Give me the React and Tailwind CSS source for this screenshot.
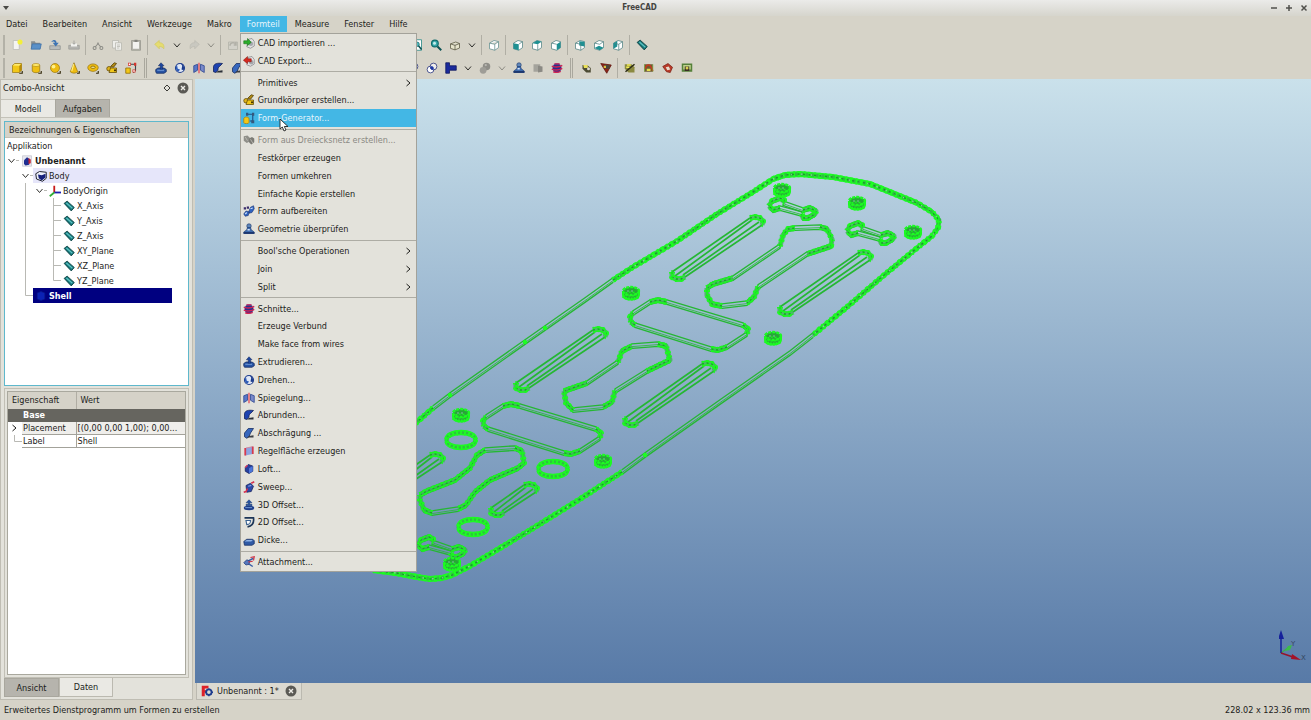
import React from 'react';

/* ---------- small icons, all on a 16x16 grid ---------- */

const shapes = {
  newDoc: <><path d="M3 2h8v12H3z" fill="#f4f4f2" stroke="#b9b9b4" /><circle cx="12" cy="4" r="3.400" fill="#f3ef3a" /></>,
  open: <><path d="M1.500 3h5l1 2h6v8h-12z" fill="#8a8f8f" /><path d="M3 6.500h12l-1.500 7H1.500z" fill="#5a90c8" stroke="#3c6fa8" /></>,
  save: <><path d="M1 9h14v5H1z" fill="#b9bcbb" stroke="#8d908f" /><path d="M3 4c3-4 7-3 7 1h3L9 10 5 5h3c-1-2-3-2-5-1z" fill="#3d74b4" /></>,
  print: <><path d="M1 8.500h14v5H1z" fill="#b4b4b0" stroke="#9a9a96" /><path d="M4 6h8v4H4z" fill="#f1f1ee" /><path d="M8 2v5M6 5l2 2 2-2" stroke="#9a9a96" fill="none" /></>,
  cut: <g fill="none" stroke="#8d8d87" strokeWidth="1.400"><path d="M4 11 9 5M12 11 7 5" /><circle cx="3.500" cy="12" r="2" /><circle cx="12.500" cy="12" r="2" /></g>,
  copy: <g fill="#eeeeea" stroke="#b5b5ae"><path d="M2 2h8v10H2z" /><path d="M6 5h8v10H6z" /><path d="M8 8h4M8 10h4M8 12h3" /></g>,
  paste: <><path d="M2 2h12v13H2z" fill="#b4b4ab" stroke="#96968d" /><path d="M4 4h8v9H4z" fill="#f3f3f0" /><path d="M6 1h4v3H6z" fill="#83837d" /></>,
  undo: <path d="m1 7 6-5v3c5 0 7 3 6 8-1-2-3-3-6-3v3z" fill="#e5dc70" stroke="#d3ca62" />,
  redo: <path d="m15 7-6-5v3c-5 0-7 3-6 8 1-2 3-3 6-3v3z" fill="#c9c8c0" stroke="#bcbbb2" />,
  refresh: <g fill="#d2d1c9" stroke="#b2b1a8"><path d="M2 4h12v10H2z" /><path d="M4 9c0-5 6-5 8-2M12 4v4H9" fill="none" strokeWidth="2" /></g>,
  fitPage: <><path d="M2 1h12v14H2z" fill="#fff" stroke="#18807f" /><circle cx="8" cy="7" r="3" fill="#56b9bb" stroke="#136b6c" /><path d="m10 9 4 5" stroke="#0c5152" strokeWidth="2" /></>,
  zoomTool: <><circle cx="6.500" cy="6" r="4.500" fill="#35a7a9" stroke="#0d6a6b" strokeWidth="1.500" /><circle cx="6" cy="5.500" r="2" fill="#c5ecec" /><path d="m10 10 5 5" stroke="#0b5253" strokeWidth="2.500" /></>,
  drawStyle: <path d="M2 6.500 9 4l5 2v6l-6 2.500-6-2zm0 0L8 8.500 14 6M8 8.500v6" fill="#e6e4cc" stroke="#55543e" />,
  cubeIso: <path d="M2 5.500 8 2l6 1.500v8L9 15l-7-2zm0 0 7 1.500 5-3.500M9 7v8" fill="#fff" stroke="#5f8c8e" />,
  cubeFront: <><path d="M2 5.500 8 2l6 1.500v8L9 15l-7-2z" fill="#fff" stroke="#4f8082" /><path d="m2 5.500 7 1.500v8l-7-2z" fill="#1e9092" /><path d="m9 7 5-3.500" stroke="#4f8082" /></>,
  cubeTop: <><path d="M2 5.500 8 2l6 1.500v8L9 15l-7-2z" fill="#fff" stroke="#4f8082" /><path d="M2 5.500 8 2l6 1.500L9 7z" fill="#1e9092" /><path d="M9 7v8" stroke="#4f8082" /></>,
  cubeRight: <><path d="M2 5.500 8 2l6 1.500v8L9 15l-7-2z" fill="#fff" stroke="#4f8082" /><path d="m9 7 5-3.500v8L9 15z" fill="#1e9092" /><path d="m2 5.500 7 1.500" stroke="#4f8082" /></>,
  cubeRear: <><path d="M2 5.500 8 2l6 1.500v8L9 15l-7-2z" fill="#fff" stroke="#4f8082" /><path d="m7 3 7 .5V10l-7-1.500z" fill="#1e9092" /><path d="m2 5.500 7 1.500v8" fill="none" stroke="#4f8082" /></>,
  cubeBottom: <><path d="M2 5.500 8 2l6 1.500v8L9 15l-7-2z" fill="#fff" stroke="#4f8082" /><path d="m2 12 6-3 6 2.500L9 15z" fill="#1e9092" /><path d="m2 5.500 7 1.500 5-3.500" fill="none" stroke="#4f8082" /></>,
  cubeLeft: <><path d="M2 5.500 8 2l6 1.500v8L9 15l-7-2z" fill="#fff" stroke="#4f8082" /><path d="m2 5.500 5-3V10l-5 3z" fill="#1e9092" /><path d="m4 6 5 1 5-3.500M9 7v8" fill="none" stroke="#4f8082" /></>,
  ruler: <><path d="m1.500 4.500 4-3 9.500 8.500-4 4.500z" fill="#16777a" stroke="#0a3f41" strokeWidth="1.200" /><path d="m4.500 4 8 7" stroke="#5fc4c4" strokeWidth="1.500" /></>,
  box: <><path d="M2 4.500 5 2h9v9l-3 3H2z" fill="#f2c718" stroke="#8a6600" strokeWidth=".8" /><path d="M11 5v8.500l3-3V2.500z" fill="#b78a08" /><path d="M2.500 4.500 5 2.500h8L11 5z" fill="#ffeb6e" /><path d="M11 15h4v-3" fill="none" stroke="#33290a" strokeWidth="1.500" /></>,
  cylinder: <><path d="M3 4v8c1 3 9 3 10 0V4z" fill="#eebf14" stroke="#8a6600" strokeWidth=".8" /><ellipse cx="8" cy="4" rx="5" ry="2" fill="#ffeb6e" stroke="#a97e08" strokeWidth=".8" /><path d="M11 15h4v-3" fill="none" stroke="#33290a" strokeWidth="1.500" /></>,
  sphere: <><circle cx="8" cy="8" r="6" fill="#eebc12" stroke="#8a6600" strokeWidth=".8" /><circle cx="6" cy="6" r="2.500" fill="#fff08a" /><path d="M11 15h4v-3" fill="none" stroke="#33290a" strokeWidth="1.500" /></>,
  cone: <><path d="M8 1 13 13c-2 2.500-8 2.500-10 0z" fill="#eebc12" stroke="#8a6600" strokeWidth=".8" /><path d="M7.500 3 5 12" stroke="#fff08a" strokeWidth="1.500" /><path d="M12 15h3v-3" fill="none" stroke="#33290a" strokeWidth="1.500" /></>,
  torus: <><ellipse cx="8" cy="7.500" rx="7" ry="5" fill="#eebc12" stroke="#8a6600" strokeWidth=".8" /><ellipse cx="8" cy="7" rx="3" ry="1.500" fill="#fff3a5" stroke="#7a5a00" /><path d="M12 15h3v-3" fill="none" stroke="#33290a" strokeWidth="1.500" /></>,
  primitives: <><path d="M6 6 11 1l3 1-4 5z" fill="#b18a14" stroke="#4f3c03" /><circle cx="4" cy="9" r="3" fill="#e0b41b" stroke="#5f4703" /><path d="M6 8h8v6H4z" fill="#f2c718" stroke="#5f4703" /><circle cx="12" cy="11" r="1.500" fill="#473500" /></>,
  builder: <><path d="M1 8h6v7H1z" fill="#f2c718" stroke="#8a6500" /><path d="M6 3h8v8l-3 3" fill="none" stroke="#43464a" strokeWidth="1.500" /><path d="M4 1h4v4H4zM12 1h3v4h-3zM10 10h4v4h-4z" fill="#d5352d" /><path d="M5 2h2v2H5zM11 11h2v2h-2z" fill="#fff" /></>,
  builderBlue: <><path d="M5 3h8v9H9" fill="none" stroke="#1b4f85" strokeWidth="1.500" /><path d="M4 1h3v4H4zM12 1h3v4h-3zM11 11h4v4h-4z" fill="#36587c" /><path d="M1 9c0-3 7-3 7 0v5c0 2-7 2-7 0z" fill="#f2c718" stroke="#a67e10" /></>,
  extrude: <><path d="M1 10 4 8h8l3 2v3l-3 2H2l-1-2z" fill="#2754a5" stroke="#12285e" /><path d="M8 1 4.500 5H7v5h3V5h2z" fill="#1b46a0" stroke="#10245a" strokeWidth=".7" /><path d="M3 11h9" stroke="#8cb4e8" /></>,
  revolve: <><circle cx="8" cy="8" r="6" fill="#dfe7f5" stroke="#1f3d8c" strokeWidth="1.500" /><path d="M4 4c-3 3-1 8 2 9l2-3-3-1z" fill="#2c5bb8" /><path d="M9 2c4 0 5 5 4 9l-3-1 1-5z" fill="#18388b" /></>,
  mirror: <><path d="m1 5 5-2v8l-5 3z" fill="#5a78c9" stroke="#27408c" /><path d="m15 5-5-2v8l5 3z" fill="#7888cb" stroke="#27408c" /><path d="M8 1v14" stroke="#e2616b" strokeWidth="2" /></>,
  fillet: <><path d="M2 6c1-4 5-5 12-4L10 6c-2 1-2 3-2 5l-3 3-3-1z" fill="#1e43b0" stroke="#0d1c53" /><path d="m8 12 6-1v3H5z" fill="#2b3038" /></>,
  chamfer: <><path d="m2 8 5-6h7l-4 6-2 5-3 2-3-2z" fill="#3767bd" stroke="#12285e" /><path d="m8 12 6-1v3H5z" fill="#3c3f45" /></>,
  booleanCircles: <><circle cx="6" cy="10" r="4.500" fill="#fff" stroke="#1d2b77" /><circle cx="10" cy="6" r="4.500" fill="#fff" fillOpacity=".6" stroke="#1d2b77" /><path d="M6 6c3-1 5 1 4 4-3 1-5-1-4-4z" fill="#1c37a5" /></>,
  join: <path d="M1 1h5v4h9v6H6v4H1z" fill="#1a2a9c" stroke="#0c145a" />,
  spheresGrey: <><circle cx="10" cy="6" r="5" fill="#8f8e88" /><circle cx="5.500" cy="11" r="4.500" fill="#9e9d97" /><circle cx="9" cy="4" r="1.500" fill="#b9b8b2" /></>,
  check: <><circle cx="8" cy="4" r="3" fill="#5f87bb" stroke="#1c3668" strokeWidth=".8" /><path d="M6 6h4l1 3 4 3v2H1v-2l4-3z" fill="#3d6cae" stroke="#1c3668" strokeWidth=".8" /><path d="M1 12h14v2.500H1z" fill="#1d3870" /><path d="M6 9h3" stroke="#d5e4f8" strokeWidth="2" /></>,
  cubeGrey: <><path d="M2 3h9v10H2z" fill="#a4a39c" /><path d="m8 5 6 1v7l-6 1z" fill="#8b8a84" /></>,
  section: <><circle cx="8" cy="8" r="6" fill="#27318e" /><path d="M1 5.500c4 1.500 10 1.500 14-1M1 9.500c4 1.500 10 1.500 14-1M3 13c3 1 7 1 10-.5" fill="none" stroke="#d42252" strokeWidth="2" /><path d="M4.500 2.500h7" stroke="#b92f66" strokeWidth="2" /></>,
  measureA: <><path d="M2 4h6l5 4v6H7L2 9z" fill="#4c4b33" /><path d="M3 4h6v4H4z" fill="#e9df5a" /><circle cx="10" cy="9" r="2" fill="#dedbd0" /></>,
  measureB: <><path d="m1 2 14 2-6 11z" fill="#8f2418" stroke="#5a130c" /><path d="M5 4h8v5H7z" fill="#4a463b" /><path d="M5 5h3v3H5z" fill="#e0c23f" /></>,
  measureC: <><path d="M1 3h9l4 4v7H6L1 9z" fill="#8b8a40" /><path d="m2 13 12-10" stroke="#2c2b15" strokeWidth="2" /><path d="M4 4h5M3 7h4" stroke="#f1ea53" strokeWidth="2" /></>,
  measureD: <><path d="M2 3h11v10H2z" fill="#6c5a34" /><path d="M3 9c2-7 7-7 10 3" stroke="#c53b1e" strokeWidth="2" fill="none" /><path d="M5 9h5v3H5z" fill="#e6e04b" /><path d="M2 13V3M13 3v10" stroke="#74a13a" /></>,
  measureE: <><path d="m1 6 7-4 6 5-3 7-5-1z" fill="#b93a28" stroke="#7c2015" /><path d="m5 7 4-1 2 4-4 1z" fill="#e9dccb" /></>,
  measureF: <><path d="M1 2h14v11H1z" fill="#55803a" /><path d="M3 4h10v6H3z" fill="#bfd28d" /><path d="M5 6h6v6H5z" fill="#3b2c25" /><circle cx="8" cy="8" r="2" fill="#d9d050" /></>,
  importCad: <><path d="m7 3 5-1 3 4v6l-5 3-5-2z" fill="#e2e3e4" stroke="#85868a" /><circle cx="10.500" cy="9" r="3" fill="#a4a7ac" /><path d="M1 5h5V2l5 5-5 4.500V9H1z" fill="#2aad2a" stroke="#126912" strokeWidth=".7" /></>,
  exportCad: <><path d="m7 3 5-1 3 4v6l-5 3-5-2z" fill="#e2e3e4" stroke="#85868a" /><circle cx="11" cy="9.500" r="3" fill="#a4a7ac" /><path d="M11 5H6V2L.5 7 6 11.500V9h5z" fill="#d6281e" stroke="#85130d" strokeWidth=".7" /></>,
  meshGrey: <><path d="m1 3 5-1 3 3v5l-4 2-4-3z" fill="#8f8f89" /><path d="m8 6 4-2 3 2v5l-4 3-3-3z" fill="#7b7b75" /><path d="m3 4 3 5M10 7l3 5" stroke="#c5c4bd" /></>,
  refine: <><path d="m8 8 2-5 4-2 1 4-3 5-4 1zM1 12l3-4 4 1-1 5-4 1z" fill="#2f63c0" stroke="#162f70" strokeWidth=".8" /><path d="M1 3h3v3H1zM5 2h3v3H5z" fill="#3a2d6a" /><path d="m10 5 3-1M3 12l2-2" stroke="#cadefa" strokeWidth="1.500" /></>,
  ruled: <><path d="m3 4 10-2v10L3 14z" fill="#8da4e0" /><path d="M3 4v10M13 2v10" stroke="#d63a4e" strokeWidth="2.400" /><path d="m4 4 8-1.600" stroke="#dc7f92" /></>,
  loft: <><path d="m3 6 4-4 6 2v7l-5 3-5-3z" fill="#26409f" stroke="#14205b" /><path d="m8 7 5-3v7l-5 3z" fill="#4b76d9" /><path d="m3 6 3-3" stroke="#d6385c" strokeWidth="2" /></>,
  sweep: <><path d="m4 6 6-3 4 4-3 7-6 1z" fill="#2b48a9" stroke="#152259" /><path d="m1 15 3-1 2-4M11 3l4-2" stroke="#d6304e" strokeWidth="2.200" fill="none" /><path d="m7 7 4-1" stroke="#8da9ee" strokeWidth="1.500" /></>,
  offset3: <><ellipse cx="8" cy="12" rx="7" ry="3" fill="#1f3f8d" /><path d="M8 1 4 5h3v2H4v2h8V7H9V5h3z" fill="#2454a5" stroke="#132c63" strokeWidth=".6" /><path d="M3 11.500h9" stroke="#8cb4e8" /></>,
  offset2: <><path d="M2 2.500h12c1 7-2 11-8 12" fill="none" stroke="#1c3557" strokeWidth="2.200" /><path d="M4 6h6c0 4-1 5-5 5.500z" fill="#fff" stroke="#3a6291" strokeWidth="1.500" /></>,
  thickness: <><path d="m1 10 4-3h8l2 2v4l-3 2H2z" fill="#2f5aa5" stroke="#162d60" /><path d="m2 10 3-2h8l-2 2z" fill="#8fb3e6" /></>,
  attach: <><path d="M14 3 4 8l9 6" fill="none" stroke="#3a5fa8" strokeWidth="2" /><path d="m1 9 4-4 4 2-1 4-4 1z" fill="#5578bd" stroke="#233c7b" /><path d="m10 2 5-1-1 5M7 8l6-1" stroke="#cf2f42" strokeWidth="1.600" fill="none" /></>,
  doc: <><path d="M2 1h12v14H2z" fill="#e8e8ee" stroke="#c6c6d0" /><path d="m4 7 4-4 3 2v8l-5 1-2-2z" fill="#1d2d91" /><path d="m10 4 3 2v5l-3 1z" fill="#c82330" /></>,
  body: <><path d="m1 5 5-3 9 1v8l-5 4-8-3z" fill="#eef1fa" stroke="#20222c" strokeWidth="1.300" /><path d="m4 6 5 1 5-2v5l-5 4-4-3z" fill="#16207a" /></>,
  origin: <><path d="M7 1v9" stroke="#c81a1a" strokeWidth="2.400" /><path d="M7 10h9" stroke="#1a1fb0" strokeWidth="2.400" /><path d="m7 10-6 5" stroke="#2fae35" strokeWidth="2.400" /></>,
  shell: <path d="m3 4 5-2 5 2v8l-5 2-5-2z" fill="#0b22b4" stroke="#0a1a8c" />,
  logo: <><path d="M1 1h9v3.500H5V7h3v3H5v5H1z" fill="#dc2129" /><circle cx="10.500" cy="9.500" r="3.600" fill="none" stroke="#1d3b8e" strokeWidth="2.400" /><path d="M10.500 4.500v2M10.500 13v2M5.500 9.500h2M14 9.500h2" stroke="#1d3b8e" strokeWidth="2" /></>,
};

function Icon({ name }) {
  return <svg viewBox="0 0 16 16" className="block h-3 w-3 shrink-0" aria-hidden="true">{shapes[name]}</svg>;
}

function Chevron({ className }) {
  return (
    <svg viewBox="0 0 8 8" className={className} fill="none" stroke="currentColor" aria-hidden="true">
      <path d="m1 2.500 3 3.500 3-3.500" />
    </svg>
  );
}

function CloseBadge() {
  return (
    <svg viewBox="0 0 12 12" className="h-3 w-3" aria-hidden="true">
      <circle cx="6" cy="6" r="5.500" fill="#5b5a55" />
      <path d="m4 4 4 4m0-4-4 4" stroke="#eeede8" strokeWidth="1.400" />
    </svg>
  );
}

/* ---------- toolbars ---------- */

function Toolbar({ label, items }) {
  return (
    <div role="toolbar" aria-label={label} className="flex h-[23px] items-center overflow-hidden">
      <span className="ml-[3px] mr-[2px] h-5 w-[2px] shrink-0 border-x border-[#b3b1a7]" />
      {items.map((item, i) => {
        if (item === '|') return <span key={i} className="mx-[2px] h-5 w-px shrink-0 bg-[#b0aea4]" />;
        if (item === '||') return <span key={i} className="mx-1 h-5 w-[3px] shrink-0 border-x border-[#a9a79d]" />;
        if (item === 'v' || item === 'vd')
          return (
            <button key={i} aria-label="Mehr" className={item === 'v' ? 'flex w-[15px] shrink-0 justify-center text-[#2e2e2b]' : 'flex w-[15px] shrink-0 justify-center text-[#8d8c84]'}>
              <Chevron className="h-2 w-2" />
            </button>
          );
        if (item === 'wide') return <span key={i} className="w-40 shrink-0" />;
        if (item === 'medium') return <span key={i} className="w-[157px] shrink-0" />;
        return (
          <button key={i} aria-label={item} className="flex h-[19px] w-[19px] shrink-0 items-center justify-center">
            <Icon name={item} />
          </button>
        );
      })}
    </div>
  );
}

const fileTools = ['newDoc', 'open', 'save', 'print', '|', 'cut', 'copy', 'paste', '|', 'undo', 'v', 'redo', 'vd', '|', 'refresh', 'wide', '|', 'fitPage', 'zoomTool', 'drawStyle', 'v', '|', 'cubeIso', '|', 'cubeFront', 'cubeTop', 'cubeRight', '|', 'cubeRear', 'cubeBottom', 'cubeLeft', '|', 'ruler'];
const partTools = ['box', 'cylinder', 'sphere', 'cone', 'torus', 'primitives', 'builder', '||', 'extrude', 'revolve', 'mirror', 'fillet', 'chamfer', 'medium', 'booleanCircles', 'booleanCircles', 'join', 'v', 'spheresGrey', 'vd', 'check', 'cubeGrey', 'section', '||', 'measureA', 'measureB', '|', 'measureC', 'measureD', 'measureE', 'measureF'];

/* ---------- menu ---------- */

const partMenu = [
  ['CAD importieren ...', 'importCad'],
  ['CAD Export...', 'exportCad'],
  null,
  ['Primitives', '', 'sub'],
  ['Grundkörper erstellen...', 'primitives'],
  ['Form-Generator...', 'builderBlue', 'active'],
  null,
  ['Form aus Dreiecksnetz erstellen...', 'meshGrey', 'disabled'],
  ['Festkörper erzeugen', ''],
  ['Formen umkehren', ''],
  ['Einfache Kopie erstellen', ''],
  ['Form aufbereiten', 'refine'],
  ['Geometrie überprüfen', 'check'],
  null,
  ["Bool'sche Operationen", '', 'sub'],
  ['Join', '', 'sub'],
  ['Split', '', 'sub'],
  null,
  ['Schnitte...', 'section'],
  ['Erzeuge Verbund', ''],
  ['Make face from wires', ''],
  ['Extrudieren...', 'extrude'],
  ['Drehen...', 'revolve'],
  ['Spiegelung...', 'mirror'],
  ['Abrunden...', 'fillet'],
  ['Abschrägung ...', 'chamfer'],
  ['Regelfläche erzeugen', 'ruled'],
  ['Loft...', 'loft'],
  ['Sweep...', 'sweep'],
  ['3D Offset...', 'offset3'],
  ['2D Offset...', 'offset2'],
  ['Dicke...', 'thickness'],
  null,
  ['Attachment...', 'attach'],
];

function PartMenu() {
  return (
    <div className="absolute left-0 top-full z-10 h-[539px] w-[177px] border border-[#a3a29a] bg-[#e3e2db] text-[#1c1c1a]">
      <ul role="menu" className="flex h-full flex-col">
        {partMenu.map((row, i) =>
          row === null ? (
            <li key={i} role="separator" className="flex h-1 shrink-0 items-center"><span className="h-px w-full bg-[#adaca4]" /></li>
          ) : (
            <li key={i} role="none" className="min-h-0 flex-1">
              <button
                role="menuitem"
                disabled={row[2] === 'disabled'}
                className={
                  row[2] === 'active'
                    ? 'flex h-full w-full items-center gap-[3px] bg-[#43b7e5] pl-[2px] pr-1 text-[#e6f5fc]'
                    : row[2] === 'disabled'
                      ? 'flex h-full w-full items-center gap-[3px] pl-[2px] pr-1 text-[#8a8983]'
                      : 'flex h-full w-full items-center gap-[3px] pl-[2px] pr-1'
                }
              >
                <span className="w-3 shrink-0">{row[1] && <Icon name={row[1]} />}</span>
                <span className="flex-1 whitespace-nowrap text-left">{row[0]}</span>
                {row[2] === 'sub' && <Chevron className="h-2 w-2 -rotate-90" />}
              </button>
            </li>
          )
        )}
      </ul>
      <svg viewBox="0 0 10 14" className="absolute left-[38px] top-[84px] h-[14px] w-[10px]" aria-hidden="true">
        <path d="M1 1v10l2.300-2 1.700 4 2-1-1.700-3.500H9z" fill="#fff" stroke="#222" strokeWidth=".9" />
      </svg>
    </div>
  );
}

/* ---------- tree ---------- */

const tree = [
  { cells: 'o', icon: 'doc', text: 'Unbenannt', look: 'bold' },
  { cells: ' o', icon: 'body', text: 'Body', look: 'soft' },
  { cells: ' vo', icon: 'origin', text: 'BodyOrigin' },
  { cells: ' v t', icon: 'ruler', text: 'X_Axis' },
  { cells: ' v t', icon: 'ruler', text: 'Y_Axis' },
  { cells: ' v t', icon: 'ruler', text: 'Z_Axis' },
  { cells: ' v t', icon: 'ruler', text: 'XY_Plane' },
  { cells: ' v t', icon: 'ruler', text: 'XZ_Plane' },
  { cells: ' v l', icon: 'ruler', text: 'YZ_Plane' },
  { cells: ' l', icon: 'shell', text: 'Shell', look: 'selected' },
];

const guides = {
  v: <path d="M6.500 0v15" />,
  t: <path d="M6.500 0v15M6.500 7.500H14" />,
  l: <path d="M6.500 0v7.500H14" />,
  o: <><path d="M11 7.500h3" /><path d="m3.500 6 3 3.500 3-3.500" stroke="#33332f" /></>,
};

const treeLooks = {
  bold: 'font-bold',
  soft: 'bg-[#e6e6fa]',
  selected: 'bg-[#000080] font-bold text-white',
};

function Tree() {
  return (
    <ul role="tree" className="pr-4">
      {tree.map((row) => (
        <li key={row.text} role="treeitem" className="flex h-[15px]">
          {[...row.cells].map((c, i) => (
            <svg key={i} viewBox="0 0 14 15" className="h-[15px] w-[14px] shrink-0" fill="none" stroke="#b9b9b4" aria-hidden="true">{guides[c]}</svg>
          ))}
          <div className={`flex flex-1 items-center ${treeLooks[row.look] || ''}`}>
            <span className="flex w-4 shrink-0 justify-center"><Icon name={row.icon} /></span>
            <span className="whitespace-nowrap">{row.text}</span>
          </div>
        </li>
      ))}
    </ul>
  );
}

function Dock() {
  return (
    <aside className="flex w-[193px] shrink-0 flex-col border border-[#bfbdb3] bg-[#e3e2db]">
      <div className="flex h-4 shrink-0 items-center pl-[2px] pr-[3px]">
        <h2 className="flex-1">Combo-Ansicht</h2>
        <button aria-label="Abdocken" className="mr-[6px] flex">
          <svg viewBox="0 0 8 8" className="h-2 w-2" fill="none" stroke="#3b3b37"><path d="m4 1 3 3-3 3-3-3z" /></svg>
        </button>
        <button aria-label="Schließen" className="flex"><CloseBadge /></button>
      </div>
      <div className="mt-[3px] flex h-[19px] shrink-0 border-b border-[#c4c2b9]" role="tablist">
        <button role="tab" className="w-[54px] border-t border-[#c4c2b9] bg-[#eae9e4]">Modell</button>
        <button role="tab" className="w-[55px] border border-b-0 border-[#a9a79e] bg-[#b6b4ad]">Aufgaben</button>
      </div>
      <section className="mx-[3px] mt-[3px] flex flex-[267] flex-col border border-[#5fb8cc] bg-white">
        <h3 className="flex h-4 shrink-0 items-center border-b border-[#c4c1b5] bg-[#d5d2c8] pl-1">Bezeichnungen &amp; Eigenschaften</h3>
        <p className="flex h-[15px] shrink-0 items-center pl-[2px]">Applikation</p>
        <Tree />
      </section>
      <section className="mx-[3px] mt-[2px] flex flex-[289] flex-col border border-[#c1bfb5] p-[2px]">
        <div className="flex-1 border border-[#a9a89e] bg-white">
          <table className="w-full table-fixed border-collapse text-left">
            <colgroup><col className="w-[14px]" /><col className="w-[54px]" /><col /></colgroup>
            <thead>
              <tr className="h-[17px] bg-[#d5d2c8]">
                <th colSpan={2} className="border-r border-[#b0ada3] p-0 pl-1 font-normal">Eigenschaft</th>
                <th className="p-0 pl-1 font-normal">Wert</th>
              </tr>
            </thead>
            <tbody className="leading-3">
              <tr className="h-[13px] bg-[#66655f] font-bold text-white">
                <td className="p-0" />
                <td className="p-0 pl-px" colSpan={2}>Base</td>
              </tr>
              <tr className="h-[13px] bg-[#efeeeb]">
                <td className="bg-white p-0"><Chevron className="ml-[2px] h-2 w-2 -rotate-90" /></td>
                <td className="border-b border-r border-[#a3a29a] p-0 pl-px">Placement</td>
                <td className="truncate border-b border-[#a3a29a] p-0 pl-px">[(0,00 0,00 1,00); 0,00...</td>
              </tr>
              <tr className="h-[13px]">
                <td className="p-0"><svg viewBox="0 0 14 12" className="h-3 w-[14px]" fill="none" stroke="#b9b9b4"><path d="M6.500 0v6.500H14" /></svg></td>
                <td className="border-b border-r border-[#a3a29a] p-0 pl-px">Label</td>
                <td className="border-b border-[#a3a29a] p-0 pl-px">Shell</td>
              </tr>
            </tbody>
          </table>
        </div>
      </section>
      <div className="mx-[3px] mb-[2px] flex h-[19px] shrink-0" role="tablist">
        <button role="tab" className="w-[55px] border border-[#a9a79e] bg-[#b6b4ad]">Ansicht</button>
        <button role="tab" className="w-[54px] border border-t-0 border-[#bbb9b0] bg-[#eae9e4]">Daten</button>
      </div>
    </aside>
  );
}

/* ---------- 3D view ---------- */

const toPath = (pts) => 'M' + pts.map((p) => p.join(' ')).join('L');
const move = (pts, dx, dy) => pts.map(([x, y]) => [x + dx, y + dy]);

function Dense({ pts, gap = 2 }) {
  const d = toPath(pts);
  return (
    <g fill="none" strokeLinejoin="round">
      <path d={d} stroke="#35b748" strokeWidth="5" strokeOpacity=".75" />
      <path d={d} stroke="#1dfb22" strokeWidth="6" strokeDasharray="1.400 3.200 2.200 2.600" />
      <path d={d} stroke="#1d9c30" strokeWidth="1.400" strokeDasharray="2 2.700" />
      <g stroke="#1cf522" strokeWidth="1.300">
        <path d={d} transform={`translate(0 ${-gap})`} />
        <path d={d} transform={`translate(0 ${gap})`} />
      </g>
    </g>
  );
}

function Rim({ pts }) {
  const d = toPath(pts);
  return (
    <g fill="none" strokeLinejoin="round">
      <path d={d} stroke="#2fbf41" strokeWidth="4.600" />
      <path d={d} stroke="#1cff22" strokeWidth="6" strokeDasharray="2 2.500 3 3" />
      <path d={d} stroke="#8fc9a4" strokeWidth="1.200" strokeDasharray="1.600 8" strokeDashoffset="3" />
      <path d={d} stroke="#1a9a2c" strokeWidth="1.400" strokeDasharray="2 3.500" />
      <path d={d} stroke="#1cfa22" strokeWidth="1.100" transform="translate(0 -2.400)" />
      <path d={d} stroke="#1cfa22" strokeWidth="1.100" transform="translate(0 2.400)" />
    </g>
  );
}

function Wires({ pts }) {
  const d = toPath(pts);
  return (
    <g fill="none" stroke="#25b733" strokeWidth="1.300">
      <path d={d} transform="translate(0 -2.200)" />
      <path d={d} transform="translate(0 .6)" strokeWidth=".8" />
      <path d={d} transform="translate(0 2.400)" />
    </g>
  );
}

function Wall({ pts, dense }) {
  const closed = [...pts, pts[0]];
  return (
    <g>
      <Wires pts={closed} />
      {dense.map(([a, b]) => <Dense key={a} pts={closed.slice(a, b + 1)} />)}
    </g>
  );
}

function Slot({ x, y, dx, dy }) {
  const low = move([[1, -3], [1, 2], [5, 4], [10, 4], [14, 2]], x, y);
  const high = move([[0, 0], [5, -1], [10, 0], [13, 3], [12, 7]], x + dx, y + dy);
  const sides = [[low[0], high[0]], [move([low[1]], 3, -1)[0], move([high[1]], -3, 3)[0]], [move([low[3]], 2, -4)[0], move([high[3]], -4, 1)[0]], [low[4], high[4]]];
  return (
    <g>
      {sides.map((s, i) => <path key={i} d={toPath(s)} stroke="#25b733" strokeWidth="1.700" />)}
      <Dense pts={low} gap={2} />
      <Dense pts={high} gap={2} />
    </g>
  );
}

function Disc({ x, y }) {
  return (
    <g fill="none" stroke="#1cfa22">
      <path d={`M${x - 8} ${y - 2}v4c1 6 15 6 16 0v-4`} fill="#2aab3a" strokeWidth="2" />
      <ellipse cx={x} cy={y - 2} rx="8" ry="4" fill="#27a637" strokeWidth="2.400" strokeDasharray="3 1" />
      <ellipse cx={x} cy={y + 1} rx="6" ry="2" strokeWidth="1.200" strokeDasharray="2 1.500" />
      <path d={`M${x - 4} ${y - 2}h8`} stroke="#7bc09a" strokeDasharray="2 2" />
      <path d={`M${x - 8} ${y + 3}c3 4 13 4 16 0`} strokeWidth="3" strokeDasharray="1.700 1.200" />
    </g>
  );
}

function Ring({ x, y }) {
  return (
    <g fill="none">
      <ellipse cx={x} cy={y} rx="14.500" ry="7.500" stroke="#2fbf41" strokeWidth="4" />
      <ellipse cx={x} cy={y} rx="14.500" ry="7.500" stroke="#1dff22" strokeWidth="5" strokeDasharray="1.700 2.300" />
      <ellipse cx={x} cy={y - 2} rx="15.500" ry="7.500" stroke="#1cfa22" strokeWidth="1.300" />
      <ellipse cx={x} cy={y + 2} rx="15.500" ry="7.500" stroke="#1cfa22" strokeWidth="1.300" />
    </g>
  );
}

const rimFar = [[613, 280], [633, 267], [677, 241], [717, 214], [753, 192], [773, 179], [785, 175], [800, 174], [833, 177], [870, 184], [890, 192], [917, 203], [932, 212], [939, 220], [938, 228], [932, 236], [917, 248], [883, 276], [847, 307], [813, 335]];
const rimRight = [[813, 335], [790, 353], [720, 402], [645, 455], [622, 472]];
const rimNear = [[622, 472], [577, 501], [527, 532], [470, 566], [452, 575], [442, 578], [430, 579], [417, 577], [396, 573], [373, 570]];
const rimLeft = [[613, 280], [585, 300], [545, 328], [525, 342], [450, 395], [433, 408]];
const rimLow = [[433, 408], [417, 422], [400, 434]];

const frame = [[631, 322], [630, 317], [633, 313], [650, 302], [658, 300], [667, 302], [743, 325], [748, 329], [747, 334], [727, 347], [718, 350], [711, 349], [635, 325]];
const clip = [[769, 206], [772, 201], [780, 198], [784, 200], [783, 203], [803, 210], [810, 208], [816, 211], [815, 214], [808, 218], [803, 218], [802, 214], [780, 208], [773, 210]];
const boneTop = [[707, 288], [713, 284], [733, 278], [780, 246], [783, 235], [788, 229], [795, 228], [820, 227], [827, 229], [832, 239], [831, 246], [807, 254], [758, 287], [754, 297], [747, 303], [722, 306], [712, 304], [707, 295]];
const boneMid = [[564, 391], [587, 383], [618, 362], [622, 351], [632, 346], [658, 344], [666, 346], [670, 360], [647, 371], [615, 391], [612, 402], [603, 407], [573, 410], [566, 403]];
const boneLow = [[420, 495], [427, 491], [455, 480], [470, 468], [477, 455], [485, 450], [515, 448], [522, 451], [524, 463], [518, 468], [490, 480], [475, 492], [466, 505], [458, 509], [432, 513], [424, 510], [420, 500]];

function Model() {
  return (
    <svg viewBox="195 79 1116 604" className="block h-full w-full" role="img" aria-label="Netzmodell">
      <Wires pts={rimRight} />
      <Wires pts={rimLeft} />
      <Rim pts={rimFar} />
      <Rim pts={rimNear} />
      <Rim pts={rimLow} />
      {[[545, 328], [525, 342], [450, 395], [645, 455]].map(([x, y]) => <circle key={x} cx={x} cy={y} r="2.200" fill="#1dff22" />)}
      <Slot x={671} y={275} dx={79} dy={-57} />
      <Slot x={779} y={310} dx={79} dy={-57} />
      <Slot x={515} y={386} dx={78} dy={-56} />
      <Slot x={624} y={421} dx={78} dy={-57} />
      <Slot x={490} y={511} dx={34} dy={-26} />
      <Slot x={396} y={481} dx={34} dy={-26} />
      <Wall pts={boneTop} dense={[[0, 2], [3, 6], [7, 11], [12, 14], [15, 18]]} />
      <Wall pts={boneMid} dense={[[0, 1], [2, 4], [5, 8], [9, 11], [12, 14]]} />
      <Wall pts={boneLow} dense={[[0, 5], [6, 13], [14, 17]]} />
      <Wall pts={frame} dense={[[0, 2], [3, 5], [6, 8], [9, 11], [12, 13]]} />
      <Wall pts={move(frame, -147, 104)} dense={[[0, 2], [3, 5], [6, 8], [9, 11], [12, 13]]} />
      {[[0, 0], [78, 25], [-351, 339]].map(([dx, dy]) => <Wall key={dx} pts={move(clip, dx, dy)} dense={[[0, 4], [5, 11], [12, 14]]} />)}
      {[[782, 190], [857, 203], [913, 232], [631, 293], [773, 338], [461, 415], [603, 461], [452, 564]].map(([x, y]) => <Disc key={x} x={x} y={y} />)}
      {[[461, 440], [553, 469], [473, 527]].map(([x, y]) => <Ring key={x} x={x} y={y} />)}
    </svg>
  );
}

function AxisCross() {
  return (
    <svg viewBox="0 0 32 36" className="absolute bottom-5 right-0 h-9 w-8" aria-hidden="true">
      <path d="m2 26 8-6" stroke="#3cae4c" strokeWidth="1.200" />
      <path d="m6 24 3-5 4-1-2 5z" fill="#3cbb4a" />
      <path d="M2 26V10" stroke="#15209b" strokeWidth="1.500" />
      <path d="m2 3 3 9H-1z" fill="#15209b" />
      <path d="m2 26 12 4" stroke="#96142a" strokeWidth="1.500" />
      <path d="m13 27 9 6-10-1z" fill="#a51228" />
      <text x="12" y="19" fontSize="7" fill="#33475f" fontFamily="DejaVu Sans">Y</text>
      <text x="22" y="33" fontSize="7" fill="#33475f" fontFamily="DejaVu Sans">X</text>
    </svg>
  );
}

const menus = ['Datei', 'Bearbeiten', 'Ansicht', 'Werkzeuge', 'Makro', 'Formteil', 'Measure', 'Fenster', 'Hilfe'];

export default function App() {
  return (
    <div className="flex h-screen flex-col overflow-hidden bg-[#d6d3c8] font-['DejaVu_Sans_Condensed','DejaVu_Sans',sans-serif] text-[9px] leading-3 text-[#1c1c1a]">
      <header className="flex h-4 shrink-0 items-center bg-linear-to-b from-[#ebebe9] to-[#d6d5cd] pl-[3px] pr-[3px] text-[#44443f]">
        <svg viewBox="0 0 6 4" className="h-1 w-[6px]" aria-hidden="true"><path d="M0 0h6L3 4z" fill="#4a4a46" /></svg>
        <h1 className="flex-1 text-center text-[8px] font-bold">FreeCAD</h1>
        <div className="flex justify-end gap-[7px]">
          {['M1 4h6', 'M1 4h6M4 1v6', 'm1.500 1.500 5 5m0-5-5 5'].map((d, i) => (
            <button key={d} aria-label={['Minimieren', 'Maximieren', 'Schließen'][i]}>
              <svg viewBox="0 0 8 8" className="h-2 w-2" stroke="#50504c" strokeWidth="1.500"><path d={d} /></svg>
            </button>
          ))}
        </div>
      </header>

      <nav className="-ml-px flex h-[17px] shrink-0 gap-px" aria-label="Hauptmenü">
        {menus.map((m) => (
          <div key={m} className="relative">
            <button className={m === 'Formteil' ? 'block h-4 bg-[#43b7e5] px-[7px] text-[#e6f5fc]' : 'block h-4 px-[7px]'}>{m}</button>
            {m === 'Formteil' && <PartMenu />}
          </div>
        ))}
      </nav>

      <Toolbar label="Datei" items={fileTools} />
      <Toolbar label="Formteil" items={partTools} />

      <div className="flex min-h-0 flex-1">
        <Dock />
        <main className="ml-[2px] flex min-w-0 flex-1 flex-col">
          <div className="relative min-h-0 flex-1 overflow-hidden bg-linear-to-b from-[#cae1eb] to-[#587aa7]">
            <Model />
            <AxisCross />
          </div>
          <div className="flex h-[17px] shrink-0" role="tablist">
            <button role="tab" className="ml-px flex items-center border border-t-0 border-[#bbb9b0] bg-[#dcdad1] px-1">
              <Icon name="logo" />
              <span className="ml-1 mr-[6px]">Unbenannt : 1*</span>
              <CloseBadge />
            </button>
          </div>
        </main>
      </div>

      <footer className="flex h-5 shrink-0 items-center justify-between pl-1 pr-px">
        <span>Erweitertes Dienstprogramm um Formen zu erstellen</span>
        <span>228.02 x 123.36 mm</span>
      </footer>
    </div>
  );
}
